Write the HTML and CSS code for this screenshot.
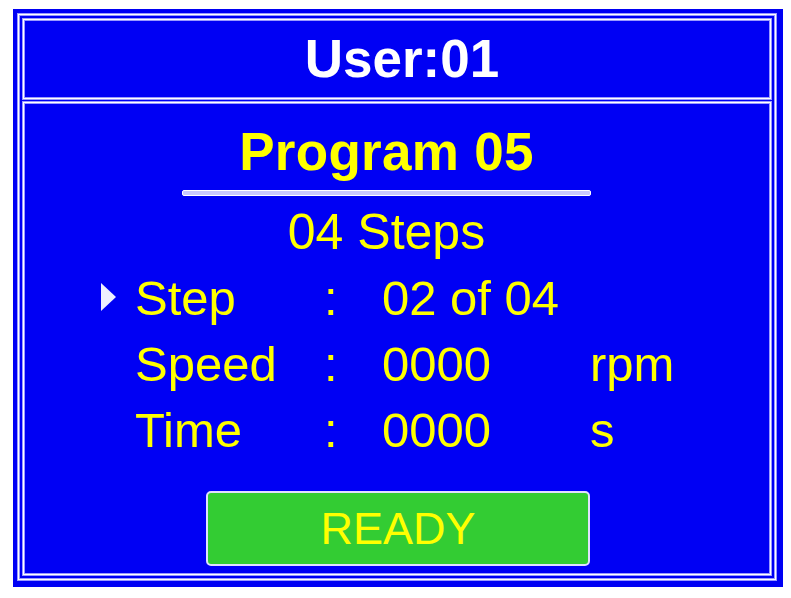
FILE: index.html
```html
<!DOCTYPE html>
<html>
<head>
<meta charset="utf-8">
<link rel="stylesheet" href="styles.css">
</head>
<body>
<div class="screen">
  <div class="frame">
    <div class="header">User:01</div>
    <div class="main">
      <div class="title-block">
        <div class="title">Program 05</div>
        <div class="rule"></div>
        <div class="subtitle">04 Steps</div>
      </div>
      <div class="rows">
        <div class="ptr"><svg width="17" height="30" viewBox="0 0 17 30"><polygon points="1,1 16,15 1,29" fill="#eef0ff"/></svg></div>
        <div class="label">Step</div>
        <div class="colon">:</div>
        <div class="value">02 of 04</div>
        <div class="unit"></div>

        <div class="ptr"></div>
        <div class="label">Speed</div>
        <div class="colon">:</div>
        <div class="value">0000</div>
        <div class="unit">rpm</div>

        <div class="ptr"></div>
        <div class="label">Time</div>
        <div class="colon">:</div>
        <div class="value">0000</div>
        <div class="unit">s</div>
      </div>
      <div class="status">READY</div>
    </div>
  </div>
</div>
</body>
</html>
```

FILE: styles.css
```css
html, body {
  margin: 0;
  padding: 0;
  background: #ffffff;
}
body {
  padding: 9px 0 0 13px;
}
.screen {
  box-sizing: border-box;
  width: 770px;
  height: 578px;
  background: #0000f4;
  padding: 5px 7px 7px 5px;
}
.frame {
  box-sizing: border-box;
  height: 100%;
  border: 1px solid #ffffff;
  box-shadow: 0 0 0 1px #9a9aff, inset 0 0 0 1px #9a9aff;
  padding: 4px;
  display: flex;
  flex-direction: column;
  gap: 3px;
}
.header, .main {
  border: 1px solid #ffffff;
  box-shadow: 0 0 0 1px #9a9aff, inset 0 0 0 1px #9a9aff;
}
.header {
  height: 78px;
  display: flex;
  align-items: center;
  justify-content: center;
  padding-left: 10px;
  color: #ffffff;
  font-family: "Liberation Sans", Arial, sans-serif;
  font-weight: bold;
  font-size: 53px;
  line-height: 56px;
}
.main {
  flex: 1;
  padding-top: 21px;
  font-family: "Liberation Sans", Arial, sans-serif;
  color: #ffff00;
}
.title-block {
  margin-left: 158px;
  width: 409px;
  text-align: center;
}
.title {
  font-weight: bold;
  font-size: 53px;
  line-height: 56px;
  letter-spacing: 0.3px;
}
.rule {
  margin-top: 10px;
  height: 4px;
  border: 1px solid #ffffff;
  border-radius: 2px;
  background: #c8c8ff;
}
.subtitle {
  margin-top: 10px;
  font-size: 50px;
  line-height: 52px;
}
.rows {
  margin-top: 7px;
  margin-left: 76px;
  display: grid;
  grid-template-columns: 35px 189px 58px 208px auto;
  grid-auto-rows: 66px;
  align-items: center;
  font-size: 49px;
  line-height: 66px;
}
.ptr {
  display: flex;
  align-items: center;
  height: 66px;
}
.ptr svg {
  display: block;
  margin-top: -2px;
}
.status {
  box-sizing: border-box;
  margin: 28px 0 0 182px;
  width: 384px;
  height: 75px;
  background: #33cc33;
  border: 2px solid #e0e0ff;
  border-radius: 5px;
  display: flex;
  align-items: center;
  justify-content: center;
  font-size: 45px;
  line-height: 50px;
  color: #ffff00;
}
```
